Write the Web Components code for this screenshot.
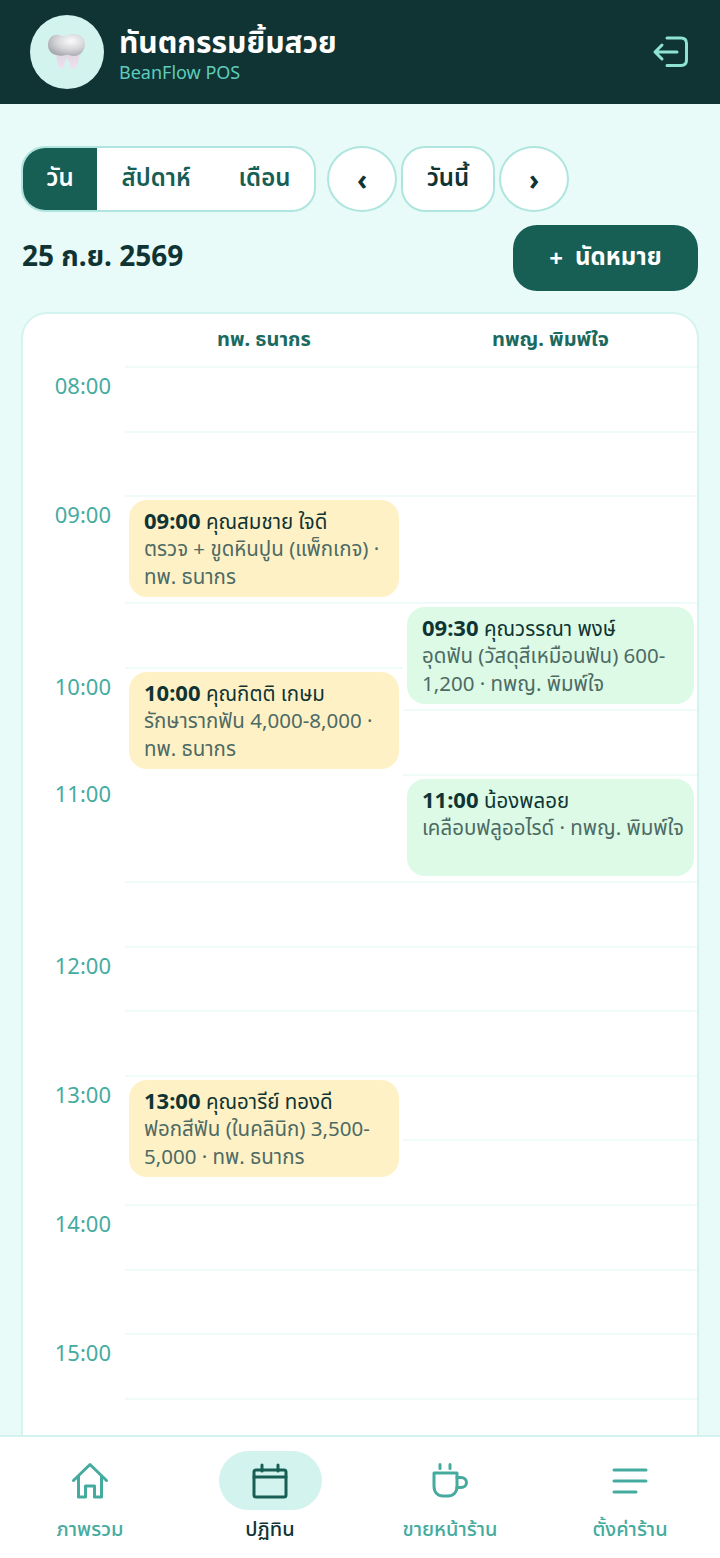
<!DOCTYPE html>
<html lang="th">
<head>
<meta charset="utf-8">
<title>ปฏิทิน</title>
<style>
    html, body {
        margin: 0;
        height: 100%;
    }
    body {
        width: 720px;
        height: 1558px;
        overflow: hidden;
        display: flex;
        flex-flow: column nowrap;
        background: #e9fbf9;
        color: #0f3433;
        font-family: "Noto Sans", "Noto Sans Thai", sans-serif;
    }
    calendar-page {
        flex: 1;
        min-height: 0;
    }
</style>
</head>
<body>
<app-header></app-header>
<calendar-page></calendar-page>
<bottom-nav></bottom-nav>

<script>
const headerTemplate = document.createElement('template');
headerTemplate.innerHTML = `
    <style>
        :host {
            display: flex;
            flex-flow: row nowrap;
            align-items: center;
            flex: none;
            height: 104px;
            box-sizing: border-box;
            padding: 0 32px 0 30px;
            background: #0f3433;
            gap: 15px;
        }
        .avatar {
            width: 74px;
            height: 74px;
            border-radius: 50%;
            background: #d3f3ef;
            display: flex;
            align-items: center;
            justify-content: center;
            flex: none;
        }
        .names {
            flex: 1;
            display: flex;
            flex-flow: column nowrap;
        }
        .title {
            font-size: 30px;
            font-weight: 700;
            line-height: 40px;
            color: #fff;
        }
        .sub {
            font-size: 18px;
            line-height: 21px;
            color: #5fcbbb;
        }
        .logout {
            width: 36px;
            height: 36px;
            flex: none;
        }
    </style>
    <div class="avatar">
        <svg width="42" height="40" viewBox="0 0 42 40">
            <defs>
                <radialGradient id="crown" cx="0.62" cy="0.32" r="0.7">
                    <stop offset="0" stop-color="#fbfbfb"></stop>
                    <stop offset="0.55" stop-color="#d6d6da"></stop>
                    <stop offset="1" stop-color="#a9aab0"></stop>
                </radialGradient>
                <linearGradient id="root" x1="0" y1="0" x2="0" y2="1">
                    <stop offset="0" stop-color="#d9d3df"></stop>
                    <stop offset="1" stop-color="#f3dff0"></stop>
                </linearGradient>
            </defs>
            <path d="M10 16C10 26 12 37 16 37C19 37 18 27 21 27C24 27 23 37 27 37C31 37 34 26 34 16Z" fill="url(#root)"></path>
            <path d="M2 13C2 6 7 2 13 3C17 4 19 5 22 3C29 0 39 3 39 12C39 19 34 24 28 24C24 24 23 22 20 23C16 24 14 24 10 23C5 22 2 18 2 13Z" fill="url(#crown)"></path>
        </svg>
    </div>
    <div class="names">
        <div class="title">ทันตกรรมยิ้มสวย</div>
        <div class="sub">BeanFlow POS</div>
    </div>
    <svg class="logout" viewBox="0 0 36 36" fill="none" stroke="#8fe3d3" stroke-width="3" stroke-linecap="round" stroke-linejoin="round">
        <path d="M15 4H29C32.500 4 34.500 6 34.500 9.500V26C34.500 29.500 32.500 31.500 29 31.500H15"></path>
        <path d="M25 18H3M10 11L3 18L10 25"></path>
    </svg>
`;

class AppHeader extends HTMLElement {
    constructor() {
        super();
        this._shadowRoot = this.attachShadow({ mode: 'open' });
        this._shadowRoot.appendChild(headerTemplate.content.cloneNode(true));
    }
}

const toolbarTemplate = document.createElement('template');
toolbarTemplate.innerHTML = `
    <style>
        :host {
            display: flex;
            flex-flow: row nowrap;
            align-items: stretch;
            height: 70px;
            gap: 4px;
        }
        .tabs {
            display: flex;
            flex-flow: row nowrap;
            box-sizing: border-box;
            width: 295px;
            margin-right: 7px;
            border: 2px solid #aee5df;
            border-radius: 24px;
            background: #fff;
            overflow: hidden;
        }
        .tab {
            display: flex;
            align-items: center;
            justify-content: center;
            font-size: 24px;
            font-weight: 600;
            color: #175e55;
        }
        .tab.day {
            width: 74px;
            background: #175e55;
            color: #fff;
        }
        .tab.week {
            width: 118px;
        }
        .tab.month {
            width: 99px;
        }
        .btn {
            display: flex;
            align-items: center;
            justify-content: center;
            box-sizing: border-box;
            border: 2px solid #aee5df;
            background: #fff;
            color: #0f3433;
            font-size: 24px;
            font-weight: 600;
        }
        .round {
            width: 70px;
            border-radius: 50%;
            font-size: 28px;
            font-weight: 700;
        }
        .today {
            width: 94px;
            border-radius: 24px;
        }
    </style>
    <div class="tabs">
        <div class="tab day">วัน</div>
        <div class="tab week">สัปดาห์</div>
        <div class="tab month">เดือน</div>
    </div>
    <div class="btn round">‹</div>
    <div class="btn today">วันนี้</div>
    <div class="btn round">›</div>
`;

class ViewToolbar extends HTMLElement {
    constructor() {
        super();
        this._shadowRoot = this.attachShadow({ mode: 'open' });
        this._shadowRoot.appendChild(toolbarTemplate.content.cloneNode(true));
    }
}

const cardTemplate = document.createElement('template');
cardTemplate.innerHTML = `
    <style>
        :host {
            display: block;
            box-sizing: border-box;
            height: 97px;
            padding: 7px 10px 7px 15px;
            border-radius: 18px;
            background: #fff1c6;
            font-size: 20.500px;
            line-height: 27.500px;
            color: #4d6a64;
        }
        :host([tone="green"]) {
            background: #dcfae6;
        }
        .head {
            color: #0f3433;
        }
        b {
            font-weight: 700;
            font-size: 22px;
        }
    </style>
    <div class="head"><b></b> <span></span></div>
    <div><slot></slot></div>
`;

class ApptCard extends HTMLElement {
    constructor() {
        super();
        this._shadowRoot = this.attachShadow({ mode: 'open' });
        this._shadowRoot.appendChild(cardTemplate.content.cloneNode(true));
        this.$time = this._shadowRoot.querySelector('b');
        this.$name = this._shadowRoot.querySelector('span');
    }

    connectedCallback() {
        this.$time.innerText = this.getAttribute('time');
        this.$name.innerText = this.getAttribute('name');
    }
}

const slotTemplate = document.createElement('template');
slotTemplate.innerHTML = `
    <style>
        :host {
            display: block;
            box-sizing: border-box;
            border-top: 2px solid #eefbf9;
            padding: 3px 4px 0;
            overflow: visible;
        }
    </style>
    <slot></slot>
`;

class DaySlot extends HTMLElement {
    constructor() {
        super();
        this._shadowRoot = this.attachShadow({ mode: 'open' });
        this._shadowRoot.appendChild(slotTemplate.content.cloneNode(true));
    }

    connectedCallback() {
        this.style.height = this.getAttribute('h') + 'px';
    }
}

const scheduleTemplate = document.createElement('template');
scheduleTemplate.innerHTML = `
    <style>
        :host {
            display: grid;
            grid-template-columns: 102px 278px 295px;
            grid-template-rows: 52px auto;
            box-sizing: border-box;
            width: 678px;
            height: 1200px;
            border: 2px solid #d3f3ef;
            border-bottom: 0;
            border-radius: 26px 26px 0 0;
            background: #fff;
            overflow: hidden;
        }
        .doc {
            display: flex;
            align-items: center;
            justify-content: center;
            font-size: 20px;
            font-weight: 700;
            color: #1a6a60;
        }
        .times {
            display: flex;
            flex-flow: column nowrap;
        }
        .time {
            box-sizing: border-box;
            padding: 4px 14px 0 0;
            text-align: right;
            font-size: 22px;
            line-height: 30px;
            color: #45ab9f;
        }
        .col {
            display: flex;
            flex-flow: column nowrap;
        }
    </style>
    <div></div>
    <div class="doc">ทพ. ธนากร</div>
    <div class="doc">ทพญ. พิมพ์ใจ</div>
    <div class="times">
        <div class="time" style="height:129px">08:00</div>
        <div class="time" style="height:172px">09:00</div>
        <div class="time" style="height:107px">10:00</div>
        <div class="time" style="height:172px">11:00</div>
        <div class="time" style="height:129px">12:00</div>
        <div class="time" style="height:129px">13:00</div>
        <div class="time" style="height:129px">14:00</div>
        <div class="time" style="height:129px">15:00</div>
    </div>
    <div class="col">
        <day-slot h="65"></day-slot>
        <day-slot h="64"></day-slot>
        <day-slot h="107"><appt-card time="09:00" name="คุณสมชาย ใจดี">ตรวจ + ขูดหินปูน (แพ็กเกจ) · ทพ. ธนากร</appt-card></day-slot>
        <day-slot h="65"></day-slot>
        <day-slot h="214"><appt-card time="10:00" name="คุณกิตติ เกษม">รักษารากฟัน 4,000-8,000 · ทพ. ธนากร</appt-card></day-slot>
        <day-slot h="65"></day-slot>
        <day-slot h="64"></day-slot>
        <day-slot h="65"></day-slot>
        <day-slot h="129"><appt-card time="13:00" name="คุณอารีย์ ทองดี">ฟอกสีฟัน (ในคลินิก) 3,500-5,000 · ทพ. ธนากร</appt-card></day-slot>
        <day-slot h="65"></day-slot>
        <day-slot h="64"></day-slot>
        <day-slot h="65"></day-slot>
        <day-slot h="65"></day-slot>
    </div>
    <div class="col">
        <day-slot h="65"></day-slot>
        <day-slot h="64"></day-slot>
        <day-slot h="107"></day-slot>
        <day-slot h="107"><appt-card tone="green" time="09:30" name="คุณวรรณา พงษ์">อุดฟัน (วัสดุสีเหมือนฟัน) 600-1,200 · ทพญ. พิมพ์ใจ</appt-card></day-slot>
        <day-slot h="65"></day-slot>
        <day-slot h="107"><appt-card tone="green" time="11:00" name="น้องพลอย">เคลือบฟลูออไรด์ · ทพญ. พิมพ์ใจ</appt-card></day-slot>
        <day-slot h="65"></day-slot>
        <day-slot h="64"></day-slot>
        <day-slot h="65"></day-slot>
        <day-slot h="64"></day-slot>
        <day-slot h="65"></day-slot>
        <day-slot h="65"></day-slot>
        <day-slot h="64"></day-slot>
        <day-slot h="65"></day-slot>
        <day-slot h="65"></day-slot>
    </div>
`;

class DaySchedule extends HTMLElement {
    constructor() {
        super();
        this._shadowRoot = this.attachShadow({ mode: 'open' });
        this._shadowRoot.appendChild(scheduleTemplate.content.cloneNode(true));
    }
}

const pageTemplate = document.createElement('template');
pageTemplate.innerHTML = `
    <style>
        :host {
            display: flex;
            flex-flow: column nowrap;
            box-sizing: border-box;
            padding: 42px 22px 0 21px;
            overflow: hidden;
        }
        .row {
            display: flex;
            flex-flow: row nowrap;
            align-items: center;
            justify-content: space-between;
            height: 66px;
            margin: 13px 0 21px 1px;
        }
        .date {
            font-size: 28px;
            font-weight: 700;
            color: #0f3433;
        }
        .add {
            display: flex;
            align-items: center;
            justify-content: center;
            gap: 12px;
            width: 185px;
            height: 66px;
            border-radius: 24px;
            background: #175e55;
            color: #fff;
            font-size: 24px;
            font-weight: 700;
        }
    </style>
    <view-toolbar></view-toolbar>
    <div class="row">
        <div class="date">25 ก.ย. 2569</div>
        <div class="add"><span>+</span><span>นัดหมาย</span></div>
    </div>
    <day-schedule></day-schedule>
`;

class CalendarPage extends HTMLElement {
    constructor() {
        super();
        this._shadowRoot = this.attachShadow({ mode: 'open' });
        this._shadowRoot.appendChild(pageTemplate.content.cloneNode(true));
    }
}

const navItemTemplate = document.createElement('template');
navItemTemplate.innerHTML = `
    <style>
        :host {
            display: flex;
            flex-flow: column nowrap;
            align-items: center;
            flex: 1;
            color: #45ab9f;
            font-size: 20px;
            font-weight: 500;
        }
        .pill {
            display: flex;
            align-items: center;
            justify-content: center;
            width: 103px;
            height: 59px;
            border-radius: 30px;
        }
        :host([active]) .pill {
            background: #d3f3ef;
            color: #175e55;
        }
        :host([active]) .label {
            color: #0f3433;
        }
        .label {
            margin-top: 4px;
            line-height: 30px;
        }
    </style>
    <div class="pill"><slot></slot></div>
    <div class="label"></div>
`;

class NavItem extends HTMLElement {
    constructor() {
        super();
        this._shadowRoot = this.attachShadow({ mode: 'open' });
        this._shadowRoot.appendChild(navItemTemplate.content.cloneNode(true));
        this.$label = this._shadowRoot.querySelector('.label');
    }

    connectedCallback() {
        this.$label.innerText = this.getAttribute('label');
    }
}

const navTemplate = document.createElement('template');
navTemplate.innerHTML = `
    <style>
        :host {
            display: flex;
            flex-flow: row nowrap;
            flex: none;
            height: 123px;
            box-sizing: border-box;
            padding-top: 14px;
            border-top: 2px solid #d3f3ef;
            background: #fff;
        }
        svg {
            width: 38px;
            height: 38px;
            fill: none;
            stroke: currentColor;
            stroke-width: 3;
            stroke-linecap: round;
            stroke-linejoin: round;
        }
    </style>
    <nav-item label="ภาพรวม">
        <svg viewBox="0 0 38 38"><path d="M2.500 18.500L19 2.500L35.500 18.500M7.500 14V35H14.500V24H23.500V35H30.500V14"></path></svg>
    </nav-item>
    <nav-item label="ปฏิทิน" active>
        <svg viewBox="0 0 38 38"><rect x="3" y="8" width="32" height="27" rx="2"></rect><path d="M3 15H35M11 3V9M27 3V9"></path></svg>
    </nav-item>
    <nav-item label="ขายหน้าร้าน">
        <svg viewBox="0 0 38 38"><path d="M3 11H26V24C26 30.500 22 34 17 34H12C7 34 3 30.500 3 24Z"></path><path d="M26 15.500H30C33.500 15.500 35.500 18 35.500 20.500C35.500 23.500 33 25.500 30 25.500H26M9 2.500V6.500M19 2.500V6.500"></path></svg>
    </nav-item>
    <nav-item label="ตั้งค่าร้าน">
        <svg viewBox="0 0 38 38"><path d="M3 8H35M3 19H35M3 30H25"></path></svg>
    </nav-item>
`;

class BottomNav extends HTMLElement {
    constructor() {
        super();
        this._shadowRoot = this.attachShadow({ mode: 'open' });
        this._shadowRoot.appendChild(navTemplate.content.cloneNode(true));
    }
}

customElements.define('app-header', AppHeader);
customElements.define('view-toolbar', ViewToolbar);
customElements.define('appt-card', ApptCard);
customElements.define('day-slot', DaySlot);
customElements.define('day-schedule', DaySchedule);
customElements.define('calendar-page', CalendarPage);
customElements.define('nav-item', NavItem);
customElements.define('bottom-nav', BottomNav);
</script>
</body>
</html>
